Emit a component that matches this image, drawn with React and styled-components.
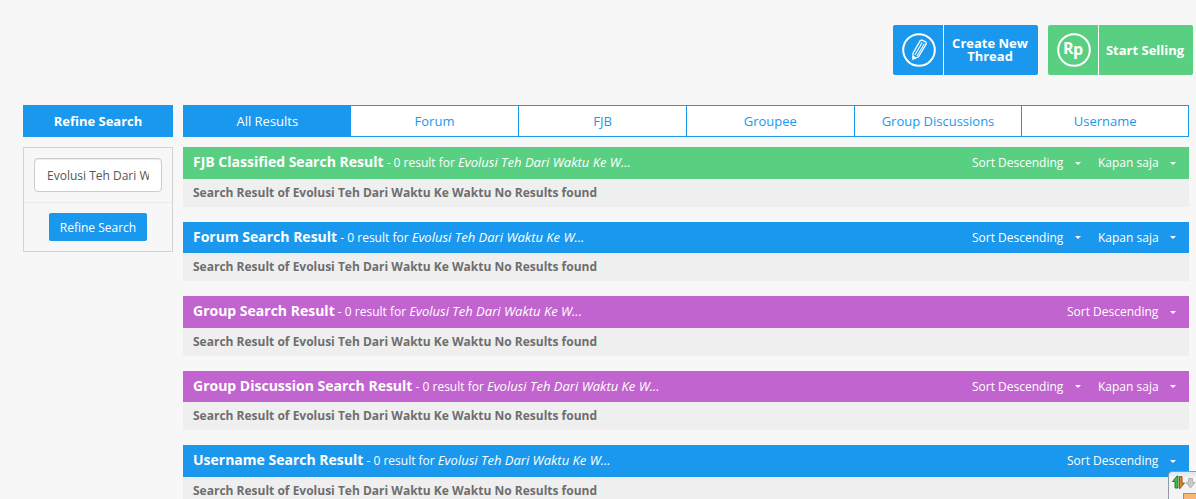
import { useState } from "react";
import styled, { createGlobalStyle } from "styled-components";

const colors = {
  blue: "#1998ed",
  green: "#59cf82",
  purple: "#c264d0",
  page: "#f7f7f7",
  panel: "#efefef",
  border: "#d4d4d4",
  text: "#6e6e6e",
};

const GlobalStyle = createGlobalStyle`
  *,
  *::before,
  *::after {
    box-sizing: border-box;
  }
  body {
    margin: 0;
    background-color: ${colors.page};
    color: ${colors.text};
    font-family: "Open Sans", "Liberation Sans", sans-serif;
    font-size: 12px;
    line-height: 1.5;
    overflow: hidden;
  }
  button,
  input,
  select {
    font-family: inherit;
  }
`;

const Page = styled.div`
  padding: 25px 7px 0 23px;
`;

const Actions = styled.div`
  display: flex;
  justify-content: flex-end;
  gap: 10px;
  margin: 0 -4px 30px 0;
`;

const ActionButton = styled.a`
  display: flex;
  width: 145px;
  height: 50px;
  border-radius: 2px;
  background-color: ${(props) => colors[props.$color]};
  color: #fff;
  font-size: 13px;
  font-weight: 700;
  line-height: 13px;
  text-align: center;
  text-decoration: none;
`;

const ActionIcon = styled.span`
  display: grid;
  place-items: center;
  flex: 0 0 51px;
  padding-left: 2px;
  border-right: 1px solid #fff;
`;

const ActionLabel = styled.span`
  flex: 1;
  align-self: center;
  padding-right: 2px;
`;

const Columns = styled.div`
  display: grid;
  grid-template-columns: 150px 1fr;
  gap: 10px;
  align-items: start;
`;

const SideTitle = styled.h2`
  margin: 0 0 10px;
  background-color: ${colors.blue};
  color: #fff;
  font-size: 13px;
  line-height: 32px;
  text-align: center;
`;

const SideForm = styled.form`
  border: 1px solid ${colors.border};
`;

const FormRow = styled.div`
  padding: 10px;
  text-align: center;

  & + & {
    border-top: 1px solid #ececec;
  }
`;

const SearchInput = styled.input`
  display: block;
  width: 100%;
  height: 34px;
  padding: 6px 12px;
  border: 1px solid #ccc;
  border-radius: 4px;
  background-color: #fff;
  box-shadow: inset 0 1px 1px rgba(0, 0, 0, 0.08);
  color: #555;
  font-size: 12px;
`;

const SubmitButton = styled.button`
  display: inline-block;
  height: 28px;
  padding: 0 11px;
  border: 0;
  border-radius: 2px;
  background-color: ${colors.blue};
  color: #fff;
  font-size: 12px;
  vertical-align: top;
`;

const Tabs = styled.nav`
  display: grid;
  grid-template-columns: repeat(6, 1fr);
  margin-bottom: 10px;
  border: solid ${colors.blue};
  border-width: 1px 0;
`;

const Tab = styled.a`
  border-left: 1px solid ${colors.blue};
  background-color: ${(props) => (props.$active ? colors.blue : "#fff")};
  color: ${(props) => (props.$active ? "#fff" : colors.blue)};
  font-size: 13px;
  line-height: 30px;
  text-align: center;
  text-decoration: none;

  &:nth-child(2) {
    border-left: 0;
  }
  &:last-child {
    border-right: 1px solid ${colors.blue};
  }
`;

const Section = styled.section`
  margin-bottom: 15px;
`;

const SectionHeader = styled.header`
  display: flex;
  align-items: center;
  justify-content: space-between;
  padding: 6px 10px;
  background-color: ${(props) => colors[props.$color]};
  color: #fff;
  font-size: 13px;
`;

const SectionTitle = styled.h3`
  margin: 0;
  font-size: inherit;
  font-weight: 400;
`;

const TitleName = styled.strong`
  font-size: 14px;
  line-height: 1;
`;

const TitleCount = styled.span`
  font-size: 12px;
  line-height: 1;
`;

const Query = styled.em`
  font-size: 13px;
`;

const Filters = styled.div`
  display: flex;
  gap: 14px;
`;

const SelectWrap = styled.label`
  position: relative;
  display: flex;
  align-items: center;
`;

const Select = styled.select`
  appearance: none;
  height: 18px;
  padding: 0 20px 0 0;
  border: 0;
  background: transparent;
  color: #fff;
  font-size: 12px;

  & option {
    color: ${colors.text};
  }
`;

const Caret = styled.svg`
  position: absolute;
  right: 3px;
  top: 8px;
  width: 6px;
  height: 3px;
  fill: #fff;
  pointer-events: none;
`;

const SectionBody = styled.p`
  margin: 0;
  padding: 5px 10px;
  background-color: ${colors.panel};
  font-weight: 700;
`;

const Dock = styled.button`
  position: fixed;
  right: -6px;
  bottom: -6px;
  width: 34px;
  height: 34px;
  padding: 0;
  border: 1px solid #8d9aa5;
  border-radius: 4px;
  background: linear-gradient(#d9e8f3, #f4f4f4 6px);
`;

const PencilIcon = () => (
  <svg width="34" height="34" viewBox="0 0 34 34" fill="none" stroke="#fff">
    <circle cx="17" cy="17" r="15.8" strokeWidth="2" />
    <path d="M18.3 7.6 19.8 7 24 9.2 24.200 11 16.500 23.800 11 26.200 11 20.200Z" strokeWidth="1.3" />
    <path d="M20.200 9.500 13 21.700M22.400 10.700 15 23" strokeWidth="1.100" />
    <path d="M11 26.200 11 23 13.800 24.800Z" fill="#fff" />
  </svg>
);

const RupiahIcon = () => (
  <svg width="34" height="34" viewBox="0 0 34 34" fill="none">
    <circle cx="17" cy="17" r="15.8" stroke="#fff" strokeWidth="2" />
    <text x="6" y="21" fill="#fff" fontSize="16" fontWeight="700">
      R
    </text>
    <text x="16" y="22" fill="#fff" fontSize="16" fontWeight="700">
      p
    </text>
  </svg>
);

const DockIcon = () => (
  <svg width="32" height="32" viewBox="0 0 32 32">
    <path d="M8 4 3.500 9.500H6V16H9V4Z" fill="#45b649" stroke="#2b7d33" />
    <path d="M10.500 4.500H13V11H15.500L10.500 17Z" fill="#d9822b" stroke="#9c5717" />
    <path d="M19.500 6.500h4v4h2.500l-4.500 5.500-4.500-5.500h2.500Z" fill="#c9c9c9" stroke="#b4b4b4" />
    <rect x="14.500" y="21.500" width="14" height="9" fill="#f9b676" stroke="#d9822b" />
  </svg>
);

const Dropdown = ({ label, options }) => (
  <SelectWrap>
    <Select aria-label={label}>
      {options.map((option) => (
        <option key={option}>{option}</option>
      ))}
    </Select>
    <Caret viewBox="0 0 6 3" aria-hidden="true">
      <path d="M0 0h6L3 3Z" />
    </Caret>
  </SelectWrap>
);

const TABS = ["All Results", "Forum", "FJB", "Groupee", "Group Discussions", "Username"];

const SECTIONS = [
  { name: "FJB Classified Search Result", color: "green", hasTime: true },
  { name: "Forum Search Result", color: "blue", hasTime: true },
  { name: "Group Search Result", color: "purple" },
  { name: "Group Discussion Search Result", color: "purple", hasTime: true },
  { name: "Username Search Result", color: "blue" },
];

const ResultSection = ({ name, color, hasTime, query }) => (
  <Section>
    <SectionHeader $color={color}>
      <SectionTitle>
        <TitleName>{name}</TitleName>
        <TitleCount>
          {" "}
          - 0 result for <Query>{query.slice(0, 27)}...</Query>
        </TitleCount>
      </SectionTitle>
      <Filters>
        <Dropdown label="Sort" options={["Sort Descending", "Sort Ascending"]} />
        {hasTime && <Dropdown label="Time" options={["Kapan saja", "Hari ini"]} />}
      </Filters>
    </SectionHeader>
    <SectionBody>Search Result of {query} No Results found</SectionBody>
  </Section>
);

const App = () => {
  const [query, setQuery] = useState("Evolusi Teh Dari Waktu Ke Waktu");
  const [submitted, setSubmitted] = useState(query);

  const handleSubmit = (e) => {
    e.preventDefault();
    setSubmitted(query);
  };

  return (
    <>
      <GlobalStyle />
      <Page>
        <Actions>
          <ActionButton href="#thread" $color="blue">
            <ActionIcon>
              <PencilIcon />
            </ActionIcon>
            <ActionLabel>Create New Thread</ActionLabel>
          </ActionButton>
          <ActionButton href="#sell" $color="green">
            <ActionIcon>
              <RupiahIcon />
            </ActionIcon>
            <ActionLabel>Start Selling</ActionLabel>
          </ActionButton>
        </Actions>

        <Columns>
          <aside>
            <SideTitle>Refine Search</SideTitle>
            <SideForm onSubmit={handleSubmit}>
              <FormRow>
                <SearchInput
                  aria-label="Search"
                  value={query}
                  onChange={(e) => setQuery(e.target.value)}
                />
              </FormRow>
              <FormRow>
                <SubmitButton type="submit">Refine Search</SubmitButton>
              </FormRow>
            </SideForm>
          </aside>

          <main>
            <Tabs>
              {TABS.map((tab, i) => (
                <Tab key={tab} href="#results" $active={i === 0}>
                  {tab}
                </Tab>
              ))}
            </Tabs>
            {SECTIONS.map((section) => (
              <ResultSection key={section.name} query={submitted} {...section} />
            ))}
          </main>
        </Columns>
      </Page>
      <Dock type="button" aria-label="Open toolbar">
        <DockIcon />
      </Dock>
    </>
  );
};

export default App;
